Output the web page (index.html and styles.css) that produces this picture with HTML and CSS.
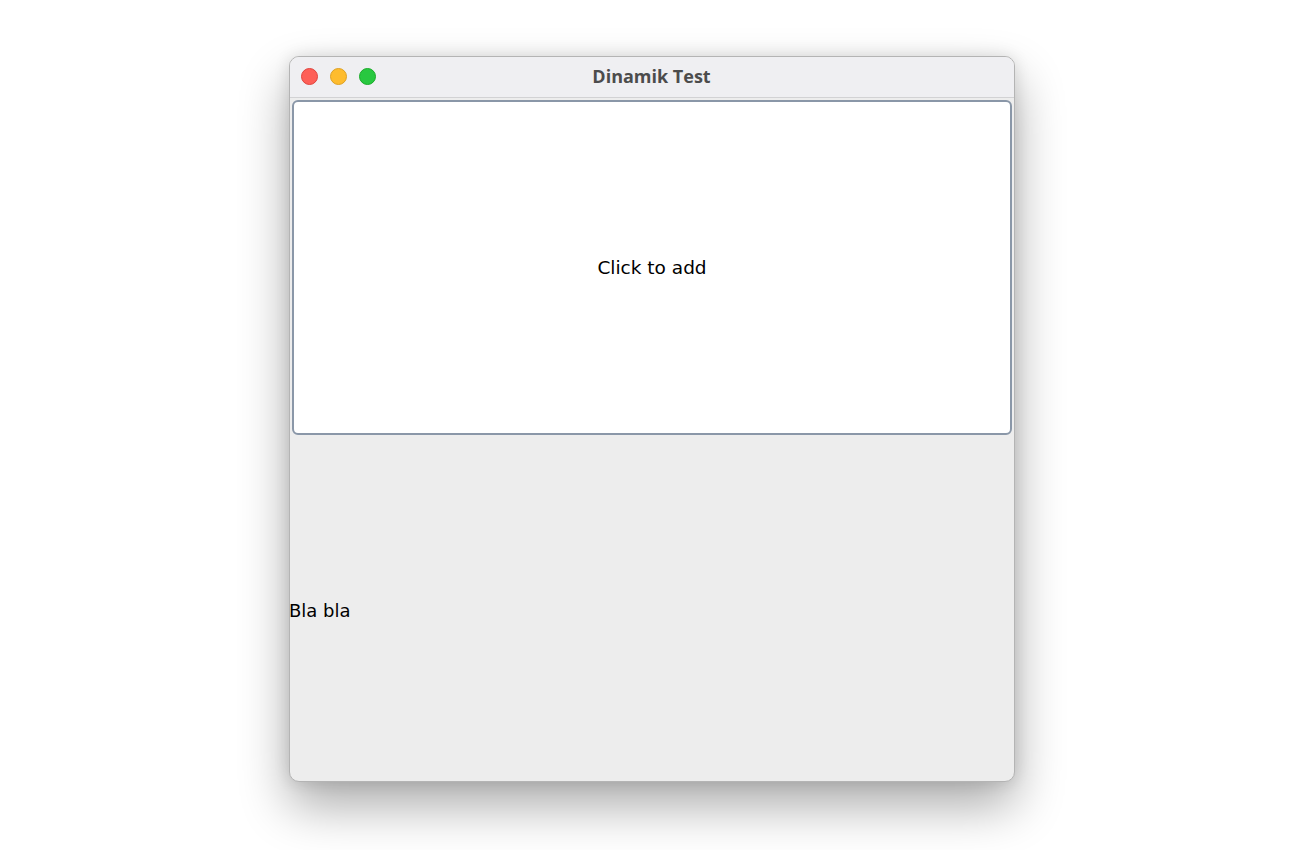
FILE: index.html
```html
<!DOCTYPE html>
<html>
<head>
<meta charset="utf-8">
<link rel="stylesheet" href="styles.css">
</head>
<body>
<div class="desktop">
  <div class="window">
    <div class="titlebar">
      <div class="lights">
        <span class="light red"></span>
        <span class="light yellow"></span>
        <span class="light green"></span>
      </div>
      <div class="title">Dinamik Test</div>
    </div>
    <div class="content">
      <div class="panel">Click to add</div>
      <div class="bottom"><span class="label">Bla bla</span></div>
    </div>
  </div>
</div>
</body>
</html>
```
FILE: styles.css
```css
html, body {
  margin: 0;
  padding: 0;
  background: #ffffff;
  width: 1300px;
  height: 850px;
  overflow: hidden;
}
.desktop {
  padding: 56px 0 0 289px;
}
.window {
  width: 726px;
  height: 726px;
  box-sizing: border-box;
  border: 1px solid #b4b4b4;
  border-radius: 10px;
  background: #ededed;
  overflow: hidden;
  display: flex;
  flex-direction: column;
  box-shadow: 0 24px 50px rgba(0,0,0,0.33), 0 0 16px rgba(0,0,0,0.12);
}
.titlebar {
  height: 40px;
  flex: none;
  background: #efeff2;
  border-bottom: 1px solid #d2d2d4;
  display: flex;
  align-items: center;
  justify-content: center;
  position: relative;
}
.lights {
  position: absolute;
  left: 11px;
  top: 11px;
  display: flex;
  gap: 12px;
}
.light {
  width: 17px;
  height: 17px;
  border-radius: 50%;
  box-sizing: border-box;
}
.red { background: #fe5f57; border: 0.5px solid #e0443e; }
.yellow { background: #febc2e; border: 0.5px solid #dea123; }
.green { background: #28c840; border: 0.5px solid #1aab29; }
.title {
  font-family: "Open Sans", "DejaVu Sans", sans-serif;
  font-weight: 700;
  font-size: 18px;
  color: #4c4c4c;
  margin-top: -2px;
  margin-left: -1px;
}
.content {
  flex: 1;
  display: flex;
  flex-direction: column;
}
.panel {
  margin: 2px 2px 0 2px;
  height: 335px;
  box-sizing: border-box;
  border: 2px solid #8a97a8;
  border-radius: 6px;
  background: #ffffff;
  display: flex;
  align-items: center;
  justify-content: center;
  font-family: "DejaVu Sans", sans-serif;
  font-size: 18.5px;
  color: #000;
}
.bottom {
  flex: 1;
  display: flex;
  align-items: center;
  margin-left: -1px;
  padding-top: 4px;
}
.label {
  font-family: "DejaVu Sans", sans-serif;
  font-size: 18px;
  color: #000;
}
```
